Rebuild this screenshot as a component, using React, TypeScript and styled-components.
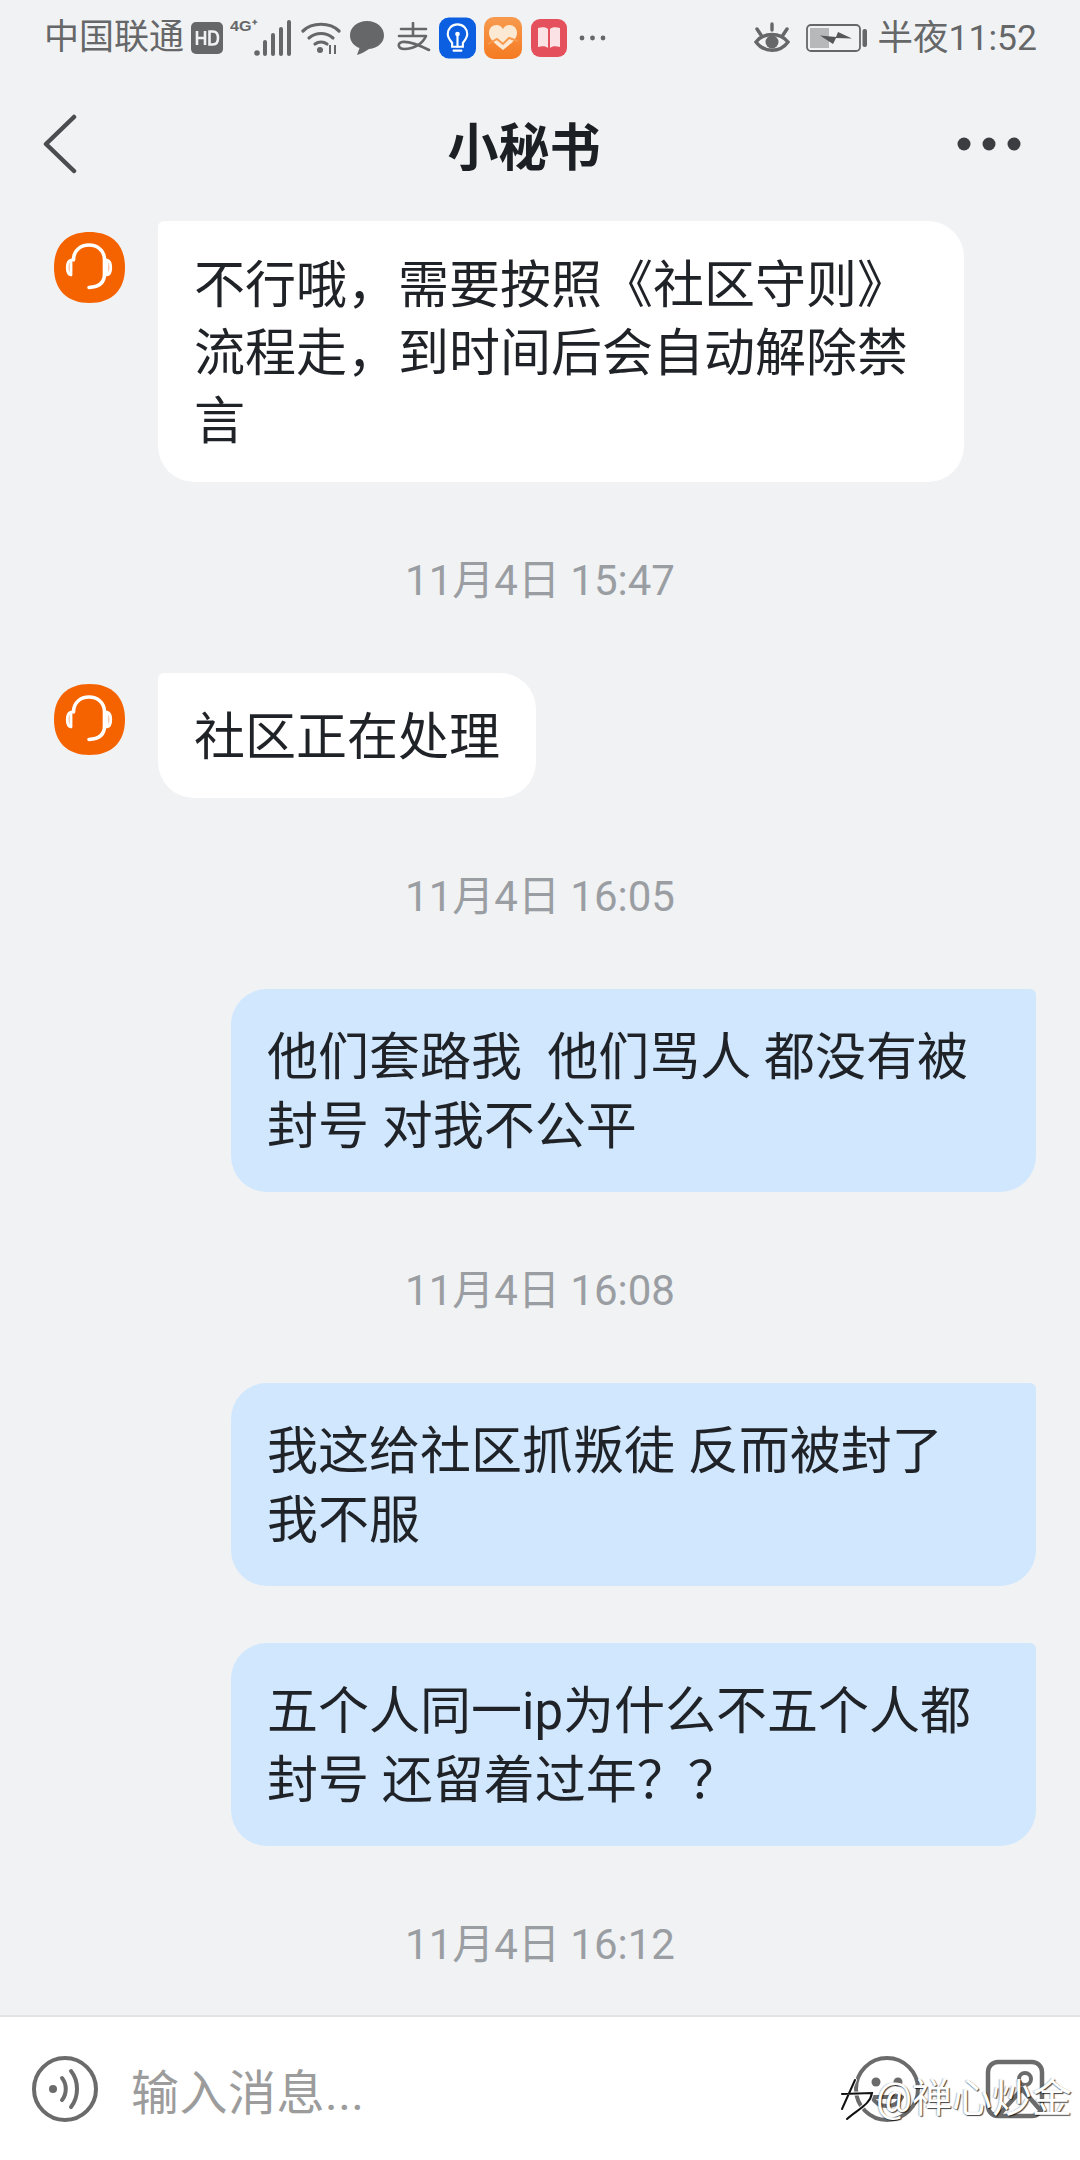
import React from 'react';
import styled, { createGlobalStyle } from 'styled-components';

const GlobalStyle = createGlobalStyle`
    html, body {
        margin: 0;
        padding: 0;
        background: #f0f2f4;
    }
    * {
        box-sizing: border-box;
    }
`;

const FONT = `Roboto, 'Noto Sans CJK SC', sans-serif`;

const Page = styled.div`
    width: 1080px;
    height: 2160px;
    display: flex;
    flex-direction: column;
    position: relative;
    overflow: hidden;
    background: #f0f2f4;
    font-family: ${FONT};
    color: #1f2226;
`;

const StatusBar = styled.div`
    height: 75px;
    padding: 0 43px 0 44px;
    display: flex;
    align-items: center;
    color: #666769;
    flex-shrink: 0;
`;

const StatusGroup = styled.div`
    display: flex;
    align-items: center;
`;

const StatusSpacer = styled.div`
    flex: 1;
`;

const StatusText = styled.span<{ $size: number }>`
    white-space: nowrap;
    line-height: 40px;
    font-size: ${(p) => p.$size}px;
`;

const IconSlot = styled.span<{ $left: number }>`
    display: flex;
    align-items: center;
    margin-left: ${(p) => p.$left}px;
`;

const NavBar = styled.div`
    height: 130px;
    padding: 7px 59px 0 43px;
    display: flex;
    align-items: center;
    justify-content: space-between;
    flex-shrink: 0;
`;

const NavTitle = styled.div`
    flex: 1;
    text-align: center;
    font-size: 51px;
    font-weight: 700;
    color: #1c1f23;
    padding-left: 14px;
`;

const Messages = styled.div`
    flex: 1;
    min-height: 0;
    padding: 16px 44px 0 54px;
    display: flex;
    flex-direction: column;
`;

const TimeRow = styled.div<{ $height?: number; $top?: number }>`
    height: ${(p) => p.$height ?? 191}px;
    padding-top: ${(p) => p.$top ?? 0}px;
    padding-bottom: 3px;
    flex-shrink: 0;
    display: flex;
    align-items: center;
    justify-content: center;
    font-size: 42px;
    color: #9a9ea3;
    margin-left: -10px;
`;

const IncomingRow = styled.div`
    display: flex;
    align-items: flex-start;
    gap: 33px;
    flex-shrink: 0;
`;

const OutgoingRow = styled.div<{ $gap?: number }>`
    display: flex;
    justify-content: flex-end;
    flex-shrink: 0;
    margin-top: ${(p) => p.$gap ?? 0}px;
`;

const AvatarBox = styled.div`
    width: 71px;
    height: 71px;
    margin-top: 11px;
    flex-shrink: 0;
`;

const Bubble = styled.div<{ $out?: boolean; $width?: number }>`
    width: ${(p) => (p.$width ? `${p.$width}px` : 'auto')};
    padding: ${(p) => (p.$out ? '34px 36px 31px' : '31px 36px 26px')};
    background: ${(p) => (p.$out ? '#d0e7fe' : '#ffffff')};
    border-radius: ${(p) => (p.$out ? '36px 6px 36px 36px' : '6px 36px 36px 36px')};
    font-size: 51px;
    line-height: ${(p) => (p.$out ? 69 : 68)}px;
    white-space: pre-wrap;
    color: #1f2226;
`;

const InputBar = styled.div`
    height: 145px;
    flex-shrink: 0;
    background: #ffffff;
    border-top: 2px solid #e2e3e5;
    padding: 0 35px 0 32px;
    display: flex;
    align-items: center;
`;

const Placeholder = styled.div`
    flex: 1;
    margin-left: 33px;
    font-size: 48px;
    letter-spacing: 0.5px;
    color: #9c9c9c;
`;

const InputIcons = styled.div`
    display: flex;
    align-items: center;
    gap: 65px;
`;

const Watermark = styled.div`
    position: absolute;
    right: 8px;
    bottom: 36px;
    display: flex;
    align-items: center;
    gap: 0;
    font-size: 40px;
    line-height: 50px;
    color: #ffffff;
    text-shadow: 1px 1px 1px rgba(0, 0, 0, 0.75), -1px 0 1px rgba(0, 0, 0, 0.25);
`;

const Back = () => (
    <svg width="34" height="60" viewBox="0 0 34 60" fill="none">
        <path d="M31 3 L3 30 L31 57" stroke="#4a4c4f" strokeWidth="4.5" strokeLinecap="round" strokeLinejoin="round" />
    </svg>
);

const MoreDots = () => (
    <svg width="64" height="14" viewBox="0 0 64 14">
        <circle cx="7" cy="7" r="6.5" fill="#3b3d40" />
        <circle cx="32" cy="7" r="6.5" fill="#3b3d40" />
        <circle cx="57" cy="7" r="6.5" fill="#3b3d40" />
    </svg>
);

const HdIcon = () => (
    <svg width="32" height="32" viewBox="0 0 32 32">
        <rect width="32" height="32" rx="5" fill="#666769" />
        <path d="M6 9v14M14 9v14M6 16h8" stroke="#eff1f4" strokeWidth="2.6" fill="none" />
        <path d="M18.5 9.5h3.5c3.6 0 5 2.6 5 6.5s-1.400 6.500-5 6.500h-3.500z" stroke="#eff1f4" strokeWidth="2.6" fill="none" />
    </svg>
);

const SignalIcon = () => (
    <svg width="62" height="40" viewBox="0 0 62 40">
        <text x="0" y="13" fontSize="15" fontWeight="700" textLength="27" lengthAdjust="spacingAndGlyphs" fontFamily="'Liberation Sans', sans-serif" fill="#666769">4G⁺</text>
        <circle cx="27" cy="35" r="2.800" fill="#666769" />
        <rect x="33" y="22" width="4" height="16" rx="2" fill="#666769" />
        <rect x="41" y="15" width="4" height="23" rx="2" fill="#666769" />
        <rect x="49" y="9" width="4" height="29" rx="2" fill="#666769" />
        <rect x="57" y="2" width="4" height="36" rx="2" fill="#666769" />
    </svg>
);

const WifiIcon = () => (
    <svg width="40" height="34" viewBox="0 0 40 34" fill="none" stroke="#666769" strokeWidth="3.2" strokeLinecap="round">
        <path d="M2 10C11 1 29 1 38 10" />
        <path d="M8 17c7-6 17-6 24 0" />
        <path d="M14 23c3.500-2.500 8.500-2.500 12 0" />
        <circle cx="19" cy="29" r="3" fill="#666769" stroke="none" />
        <path d="M29 24v9M34 24v9" strokeWidth="2" strokeLinecap="butt" />
    </svg>
);

const ChatIcon = () => (
    <svg width="36" height="36" viewBox="0 0 36 36">
        <path d="M18 1C8 1 1 7.500 1 15.500c0 6 4 10.500 9.500 12.500L8 35c5-1.500 9-4 12-6 9-1 15-6.500 15-13.500C35 7.500 28 1 18 1z" fill="#666769" />
    </svg>
);

const AlipayIcon = () => (
    <svg width="36" height="32" viewBox="0 0 36 32" fill="none" stroke="#666769" strokeWidth="2.6" strokeLinecap="round" strokeLinejoin="round">
        <path d="M6 7h25M18 1v12M4 14h27C28 21 20 27 9 27c-6 0-7-6-2-7 7-1 17 3 27 8" />
    </svg>
);

const BulbApp = () => (
    <svg width="37" height="42" viewBox="0 0 38 42">
        <rect width="38" height="42" rx="10" fill="#0b5fe0" />
        <path d="M19 7c-6 0-10 4.500-10 10 0 4 2.500 6.500 4.500 9v4h11v-4c2-2.500 4.500-5 4.500-9 0-5.500-4-10-10-10z" fill="none" stroke="#fff" strokeWidth="2.200" />
        <path d="M15 34h8M19 30V19" stroke="#fff" strokeWidth="2.200" strokeLinecap="round" />
        <circle cx="19" cy="17" r="2.400" fill="#fff" />
    </svg>
);

const HeartApp = () => (
    <svg width="38" height="42" viewBox="0 0 38 42">
        <defs>
            <linearGradient id="heartApp" x1="0" y1="0" x2="0" y2="1">
                <stop offset="0" stopColor="#f79a4f" />
                <stop offset="1" stopColor="#f57a22" />
            </linearGradient>
        </defs>
        <rect width="38" height="42" rx="10" fill="url(#heartApp)" />
        <path d="M19 33C10 26 5 22 5 15.500 5 11 8.500 8 12.500 8c3 0 5 1.500 6.500 4 1.500-2.500 3.500-4 6.500-4C29.500 8 33 11 33 15.500 33 22 28 26 19 33z" fill="#fbe9d4" />
        <path d="M4 27l9-5 6 5 6-6 9 3" stroke="#f79a4f" strokeWidth="2" fill="none" />
    </svg>
);

const BookApp = () => (
    <svg width="36" height="38" viewBox="0 0 36 38">
        <rect width="36" height="38" rx="9" fill="#e4505c" />
        <path d="M7 9c4-1 8-1 10 1v19c-2-2-6-2-10-1zM29 9c-4-1-8-1-10 1v19c2-2 6-2 10-1z" fill="#fbe3e5" />
    </svg>
);

const TinyDots = () => (
    <svg width="27" height="6" viewBox="0 0 27 6">
        <circle cx="3" cy="3" r="2.400" fill="#666769" />
        <circle cx="13.500" cy="3" r="2.400" fill="#666769" />
        <circle cx="24" cy="3" r="2.400" fill="#666769" />
    </svg>
);

const EyeIcon = () => (
    <svg width="36" height="32" viewBox="0 0 36 32" fill="none" stroke="#666769" strokeWidth="3.4" strokeLinecap="round">
        <path d="M2 20c8-10 24-10 32 0-8 11-24 11-32 0z" />
        <circle cx="18" cy="20" r="6.500" fill="#666769" stroke="none" />
        <path d="M18 2v6M3 7l4 6M33 7l-4 6" />
    </svg>
);

const BatteryIcon = () => (
    <svg width="61" height="28" viewBox="0 0 61 28">
        <rect x="1" y="1" width="53" height="26" rx="4" fill="none" stroke="#666769" strokeWidth="1.800" />
        <rect x="4" y="4" width="19" height="20" fill="#b7b8ba" />
        <path d="M14 11.500l16 1.500 2-5 14 6.500-16-.5-3 6z" fill="#555759" />
        <rect x="56.500" y="5" width="4.500" height="18" rx="2" fill="#666769" />
    </svg>
);

const Avatar = () => (
    <AvatarBox>
        <svg width="71" height="71" viewBox="0 0 71 71" fill="none">
            <path d="M35.500 0C58 0 71 13 71 35.500S58 71 35.500 71 0 58 0 35.500 13 0 35.500 0z" fill="#f56300" />
            <path d="M19.500 28C19.500 8 50.500 8 50.500 28V42C50.500 51 44 55 35 55.500" stroke="#fff" strokeWidth="3.600" strokeLinecap="round" />
            <path d="M17 28c-5 1-5 14 0 15zM53 28c5 1 5 14 0 15z" stroke="#fff" strokeWidth="2.800" fill="#f8a77a" strokeLinejoin="round" />
        </svg>
    </AvatarBox>
);

const VoiceIcon = () => (
    <svg width="66" height="66" viewBox="0 0 66 66" fill="none" stroke="#6b6b6b" strokeLinecap="round">
        <circle cx="33" cy="33" r="31" strokeWidth="4" />
        <circle cx="21" cy="33" r="4" fill="#6b6b6b" stroke="none" />
        <path d="M30 22c5 6 5 16 0 22" strokeWidth="4" />
        <path d="M39 15c8 10 8 26 0 36" strokeWidth="4" />
    </svg>
);

const EmojiIcon = () => (
    <svg width="66" height="66" viewBox="0 0 66 66" fill="none" stroke="#6b6b6b">
        <circle cx="33" cy="33" r="31" strokeWidth="4" />
        <circle cx="22" cy="26" r="4.500" fill="#6b6b6b" stroke="none" />
        <circle cx="44" cy="26" r="4.500" fill="#6b6b6b" stroke="none" />
        <path d="M18 41c6 12 24 12 30 0z" strokeWidth="4" strokeLinejoin="round" />
    </svg>
);

const ImageIcon = () => (
    <svg width="60" height="60" viewBox="0 0 60 60" fill="none" stroke="#6b6b6b" strokeWidth="4.500" strokeLinejoin="round">
        <rect x="3" y="3" width="54" height="54" rx="10" />
        <circle cx="40" cy="20" r="6" strokeWidth="4" />
        <path d="M14 56L37 30L57 53" />
    </svg>
);

const WeiboMark = () => (
    <svg width="40" height="48" viewBox="0 0 40 48" fill="none" strokeLinecap="round">
        <g stroke="#fff" strokeWidth="4" opacity="0.9">
            <path d="M6 34L19 5M6 19L36 18C34 30 22 34 11 44" />
        </g>
        <g stroke="#111" strokeWidth="2">
            <path d="M6 34L19 5M6 19L36 18C34 30 22 34 11 44" />
        </g>
    </svg>
);

const App: React.FC = () => {
    return (
        <Page>
            <GlobalStyle />
            <StatusBar>
                <StatusGroup>
                    <StatusText $size={35}>中国联通</StatusText>
                    <IconSlot $left={7}><HdIcon /></IconSlot>
                    <IconSlot $left={7}><SignalIcon /></IconSlot>
                    <IconSlot $left={9}><WifiIcon /></IconSlot>
                    <IconSlot $left={8}><ChatIcon /></IconSlot>
                    <IconSlot $left={10}><AlipayIcon /></IconSlot>
                    <IconSlot $left={8}><BulbApp /></IconSlot>
                    <IconSlot $left={8}><HeartApp /></IconSlot>
                    <IconSlot $left={9}><BookApp /></IconSlot>
                    <IconSlot $left={12}><TinyDots /></IconSlot>
                </StatusGroup>
                <StatusSpacer />
                <StatusGroup>
                    <EyeIcon />
                    <IconSlot $left={16}><BatteryIcon /></IconSlot>
                    <IconSlot $left={11}><StatusText $size={35.5}>半夜11:52</StatusText></IconSlot>
                </StatusGroup>
            </StatusBar>
            <NavBar>
                <Back />
                <NavTitle>小秘书</NavTitle>
                <MoreDots />
            </NavBar>
            <Messages>
                <IncomingRow>
                    <Avatar />
                    <Bubble $width={806}>不行哦，需要按照《社区守则》流程走，到时间后会自动解除禁言</Bubble>
                </IncomingRow>
                <TimeRow>11月4日 15:47</TimeRow>
                <IncomingRow>
                    <Avatar />
                    <Bubble>社区正在处理</Bubble>
                </IncomingRow>
                <TimeRow>11月4日 16:05</TimeRow>
                <OutgoingRow>
                    <Bubble $out $width={805}>他们套路我  他们骂人 都没有被封号 对我不公平</Bubble>
                </OutgoingRow>
                <TimeRow>11月4日 16:08</TimeRow>
                <OutgoingRow>
                    <Bubble $out $width={805}>我这给社区抓叛徒 反而被封了{'\n'}我不服</Bubble>
                </OutgoingRow>
                <OutgoingRow $gap={57}>
                    <Bubble $out $width={805}>五个人同一ip为什么不五个人都封号 还留着过年？？</Bubble>
                </OutgoingRow>
                <TimeRow $height={169} $top={23}>11月4日 16:12</TimeRow>
            </Messages>
            <InputBar>
                <VoiceIcon />
                <Placeholder>输入消息...</Placeholder>
                <InputIcons>
                    <EmojiIcon />
                    <ImageIcon />
                </InputIcons>
            </InputBar>
            <Watermark>
                <WeiboMark />
                <span>@禅心炒金</span>
            </Watermark>
        </Page>
    );
};

export default App;
